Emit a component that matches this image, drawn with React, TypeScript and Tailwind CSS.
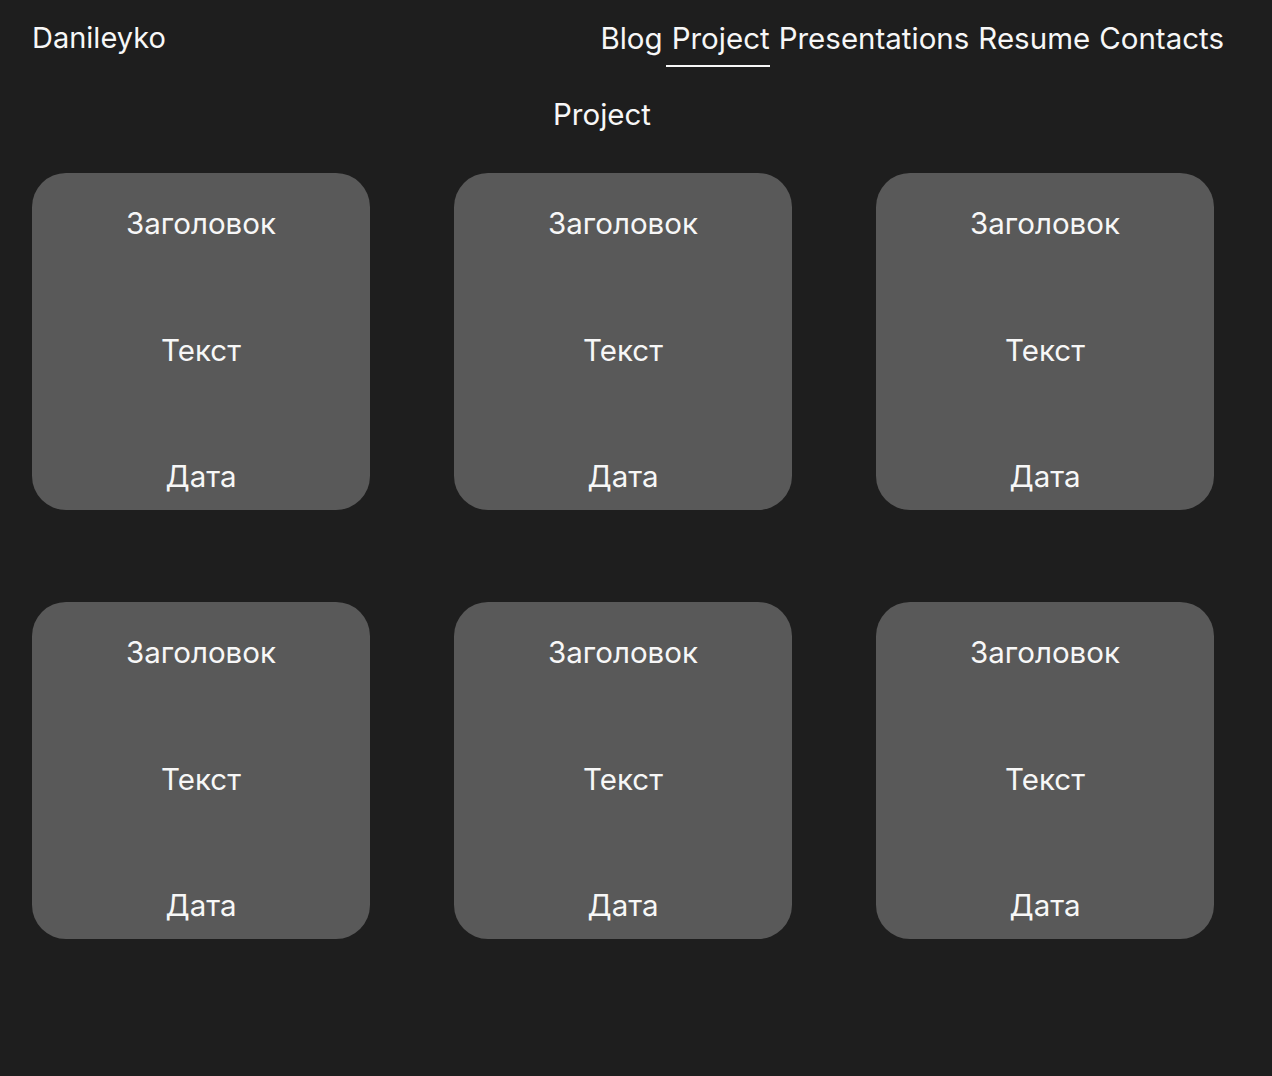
const navItems = ["Blog", "Project", "Presentations", "Resume", "Contacts"];

const Card = () => (
    <div className="w-[338px] h-[337px] rounded-[34px] bg-[#595959] flex flex-col items-center justify-between pt-[33px] pb-[17px] text-[29.5px] leading-[34px]">
        <p>Заголовок</p>
        <p>Текст</p>
        <p>Дата</p>
    </div>
);

export default function App() {
    return (
        <div className="min-h-[1076px] w-full bg-[#1e1e1e] text-[#f7f7f7] font-['Inter',sans-serif] pl-8">
            <header className="flex items-start justify-between pr-[48px] pt-[21px] text-[29.5px] leading-[34px]">
                <h1 className="text-[29px]">Danileyko</h1>
                <nav className="flex gap-[9px]">
                    {navItems.map((item) => (
                        <a
                            key={item}
                            className={item === "Project" ? "border-b-2 border-[#f7f7f7] pb-[10px] pl-[6px] -ml-[6px]" : ""}
                        >
                            {item}
                        </a>
                    ))}
                </nav>
            </header>
            <h2 className="w-[1140px] text-center text-[29.5px] leading-[34px] mt-[30px]">Project</h2>
            <div className="grid grid-cols-[repeat(3,338px)] gap-x-[84px] gap-y-[92px] mt-[42px]">
                {[1, 2, 3, 4, 5, 6].map((i) => (
                    <Card key={i} />
                ))}
            </div>
        </div>
    );
}
